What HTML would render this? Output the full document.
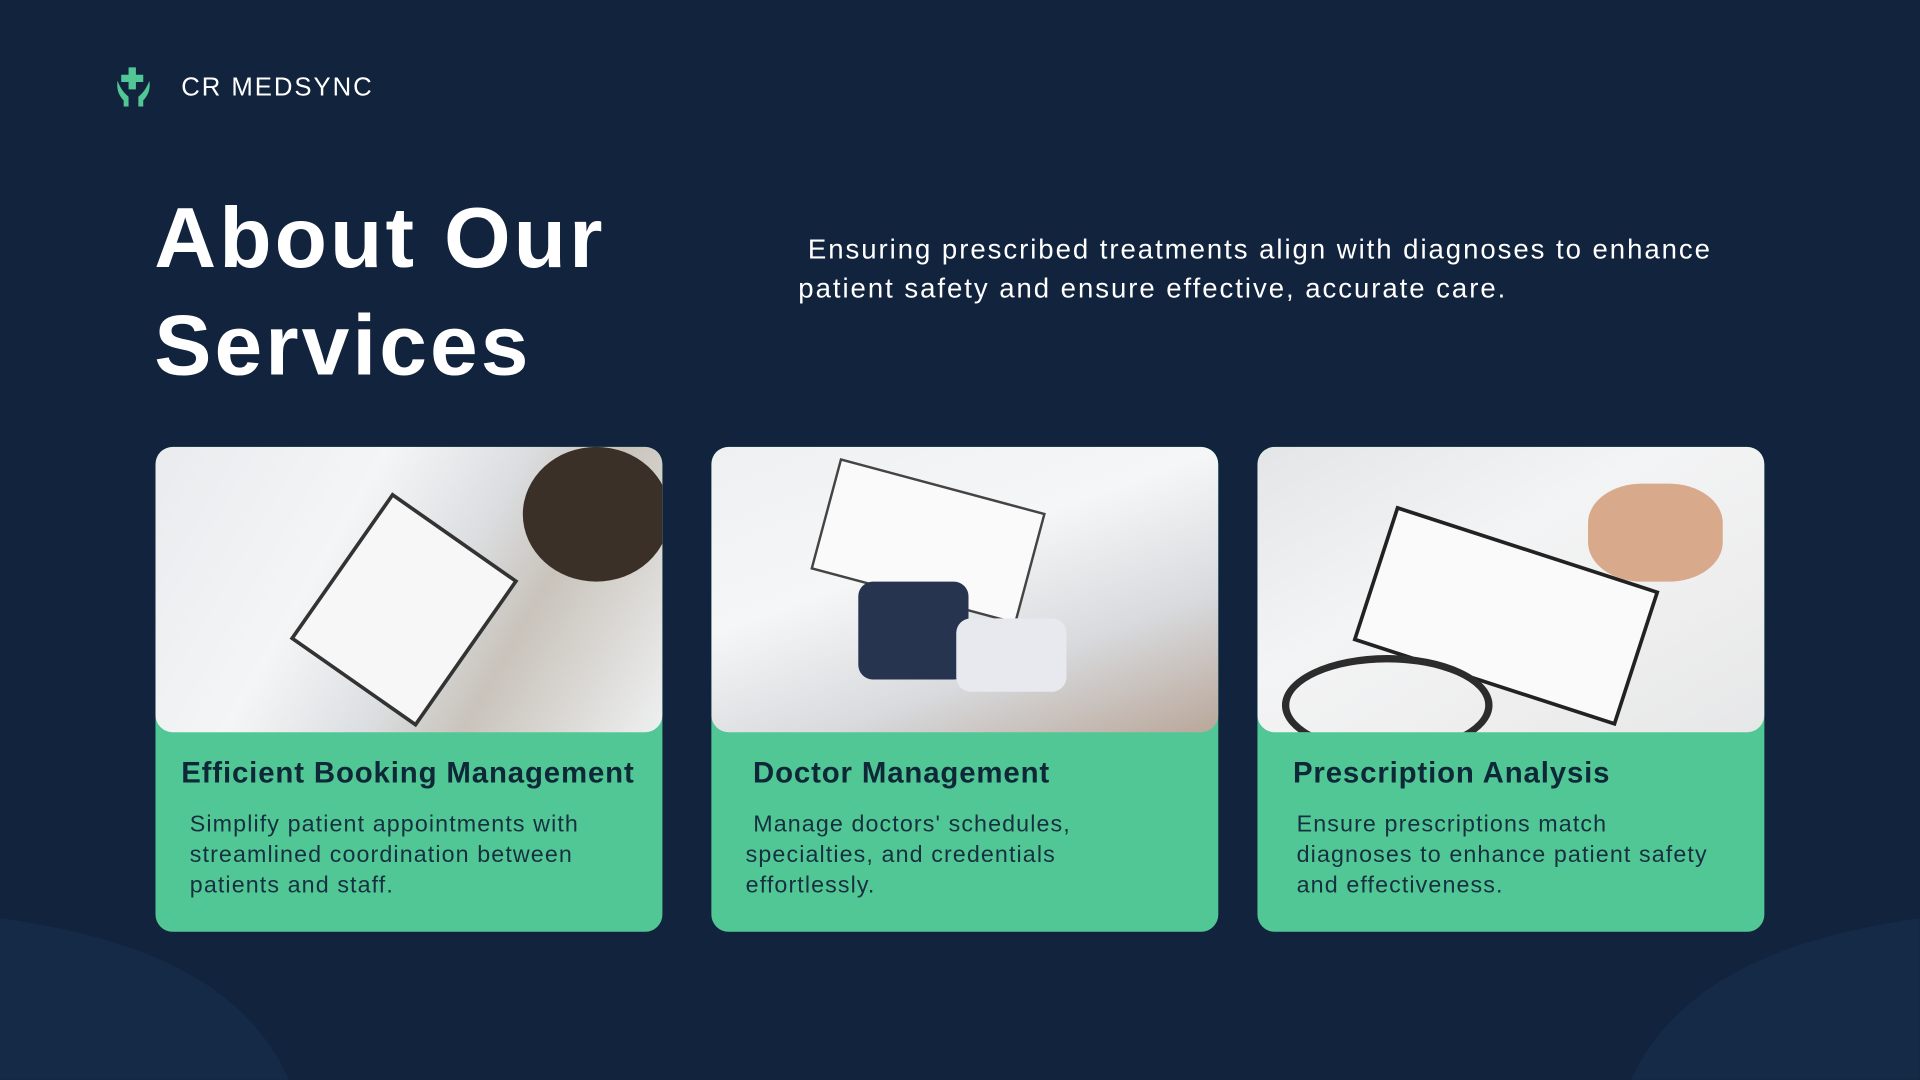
<!DOCTYPE html>
<html><head><meta charset="utf-8"><style>
html,body{margin:0;padding:0;background:#12233d;overflow:hidden;width:1920px;height:1080px}
#w{position:absolute;left:0;top:0;width:1568px;height:882px;transform:scale(1.2244);transform-origin:0 0;font-family:"Liberation Sans",sans-serif;color:#fff;overflow:hidden}
.card{position:absolute;top:365px;width:414px;height:396px;background:#52c796;border-radius:14px;overflow:hidden}
.img{height:233px;border-radius:14px;position:relative;overflow:hidden}
.t{position:absolute;top:365px;width:414px;height:396px}
.t h3{position:absolute;top:253px;margin:0;font-size:24px;font-weight:bold;color:#0f2838;letter-spacing:0.7px;white-space:nowrap}
.t p{position:absolute;top:296px;margin:0;font-size:19px;line-height:25px;color:#173040;letter-spacing:0.9px;white-space:nowrap}
</style></head><body><div id="w">
<svg style="position:absolute;left:0;top:0" width="1568" height="882" viewBox="0 0 1568 882">
<path d="M0 750 C110 765 200 800 236 882 L0 882 Z" fill="#152a46"/>
<path d="M1568 750 C1460 765 1370 800 1332 882 L1568 882 Z" fill="#152a46"/>
</svg>
<svg style="position:absolute;left:93px;top:54px" width="32" height="36" viewBox="0 0 32 36">
<path d="M12 1h6v6h6v6h-6v6h-6v-6H6V7h6z" fill="#52c796"/>
<path d="M3 12c2 5 4 9 9 13v8h-4v-5C4 24 2 19 3 12z" fill="#52c796"/>
<path d="M29 12c-2 5-4 9-9 13v8h4v-5c4-4 6-9 5-16z" fill="#52c796"/>
</svg>
<div style="position:absolute;left:148px;top:60px;font-size:21px;letter-spacing:1.6px">CR MEDSYNC</div>
<div style="position:absolute;left:126px;top:150px;font-size:70px;font-weight:bold;line-height:88px;letter-spacing:2.5px">About Our<br>Services</div>
<div style="position:absolute;left:652px;top:188px;font-size:22.5px;line-height:32px;letter-spacing:1.6px;white-space:nowrap">&nbsp;Ensuring prescribed treatments align with diagnoses to enhance<br>patient safety and ensure effective, accurate care.</div>

<div class="card" style="left:127px"><div class="img" style="background:linear-gradient(120deg,#e9ebee 0%,#f4f5f6 35%,#dcdfe2 55%,#c9c3bb 70%,#eef0f1 100%)">
<div style="position:absolute;left:140px;top:60px;width:120px;height:140px;background:#f7f7f7;transform:rotate(35deg);border:3px solid #333"></div>
<div style="position:absolute;left:300px;top:0;width:120px;height:110px;background:#3b3028;border-radius:50%"></div></div></div>
<div class="card" style="left:581px"><div class="img" style="background:linear-gradient(160deg,#eef0f2 0%,#f5f6f7 40%,#d8dadd 70%,#b9a79a 100%)">
<div style="position:absolute;left:90px;top:30px;width:170px;height:90px;background:#fafafa;transform:rotate(15deg);border:2px solid #444"></div>
<div style="position:absolute;left:120px;top:110px;width:90px;height:80px;background:#26344f;border-radius:12px"></div>
<div style="position:absolute;left:200px;top:140px;width:90px;height:60px;background:#e8e8ef;border-radius:12px"></div></div></div>
<div class="card" style="left:1027px"><div class="img" style="background:linear-gradient(150deg,#e3e5e7 0%,#f3f4f5 40%,#eeeeee 70%,#e6e7e8 100%)">
<div style="position:absolute;left:90px;top:80px;width:220px;height:110px;background:#fafafa;transform:rotate(18deg);border:3px solid #222"></div>
<div style="position:absolute;left:270px;top:30px;width:110px;height:80px;background:#d9a98c;border-radius:40%"></div>
<div style="position:absolute;left:20px;top:170px;width:160px;height:70px;border:6px solid #2c2c2c;border-radius:50%"></div></div></div>

<div class="t" style="left:127px"><h3 style="left:21px">Efficient Booking Management</h3><p style="left:28px">Simplify patient appointments with<br>streamlined coordination between<br>patients and staff.</p></div>
<div class="t" style="left:581px"><h3 style="left:34px">Doctor Management</h3><p style="left:28px">&nbsp;Manage doctors' schedules,<br>specialties, and credentials<br>effortlessly.</p></div>
<div class="t" style="left:1027px"><h3 style="left:29px">Prescription Analysis</h3><p style="left:32px">Ensure prescriptions match<br>diagnoses to enhance patient safety<br>and effectiveness.</p></div>
</div></body></html>
